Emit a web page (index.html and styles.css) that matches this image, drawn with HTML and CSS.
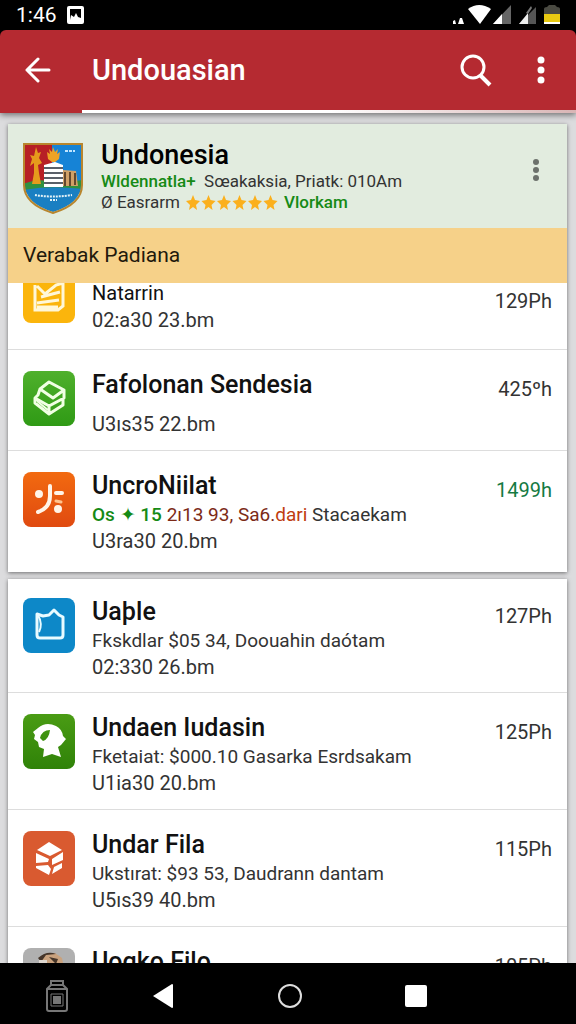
FILE: index.html
```
<!DOCTYPE html>
<html lang="id">
<head>
  <meta charset="UTF-8">
  <title>Undouasian</title>
  <meta name="viewport" content="width=device-width, initial-scale=1.0">
  <link rel="stylesheet" href="styles.css">
</head>
<body>
  <div class="status-bar">
    <span class="clock">1:46</span>
    <svg width="17" height="18" viewBox="0 0 17 18"><rect width="17" height="18" rx="2" fill="#fff"/><path d="M3 3h11v11H3z" fill="#000"/><path d="M3 14l1-5 3 2 2-4 2 4 3 1v2z" fill="#fff"/></svg>
    <svg class="signals" width="108" height="20" viewBox="0 0 108 20">
      <path d="M0 19v-3l2-1 1 4zM5 19l2-6h2l2 6z" fill="#fff"/>
      <path d="M15 4Q26-4 38 4L27 19z" fill="#fff"/>
      <path d="M40 19L58 0v19z" fill="#666"/><path d="M40 19l9-10v10z" fill="#fff"/>
      <path d="M66 19L83 2v17z" fill="#555"/><path d="M66 19l9-11v11z" fill="#eee"/><path d="M73 8l5-7 1 2-4 6z" fill="#777"/>
      <path d="M91 4q0-2 3-2l2-2h6l2 2q3 0 3 2v15H91z" fill="#4a4a42"/><path d="M91 9h16v10H91z" fill="#e8c912"/><path d="M91 17h16v2H91z" fill="#fff"/>
    </svg>
  </div>

  <header class="app-bar">
    <button class="icon-btn" aria-label="Kembali">
      <svg width="26" height="26" viewBox="0 0 26 26" fill="none" stroke="#fff" stroke-width="3" stroke-linecap="round" stroke-linejoin="round"><path d="M13 2L2 13l11 11M2 13h22"/></svg>
    </button>
    <h1>Undouasian</h1>
    <button class="icon-btn search-btn" aria-label="Cari">
      <svg width="32" height="34" viewBox="0 0 32 34" fill="none" stroke="#fff"><circle cx="13" cy="14" r="11" stroke-width="3"/><path d="M20 22l10 10" stroke-width="4"/></svg>
    </button>
    <button class="icon-btn" aria-label="Menu">
      <svg width="8" height="28" viewBox="0 0 8 28" fill="#fff"><circle cx="4" cy="4" r="3.5"/><circle cx="4" cy="14" r="3.5"/><circle cx="4" cy="24" r="3.5"/></svg>
    </button>
  </header>

  <main class="content">
    <section class="card">
      <div class="profile">
        <svg class="crest" width="60" height="71" viewBox="0 0 60 71">
          <defs><clipPath id="shield"><path d="M2 2h56v40q0 18-28 27Q2 60 2 42z"/></clipPath></defs>
          <g clip-path="url(#shield)">
            <path d="M0 0h30v50H0z" fill="#b71f25"/>
            <path d="M29 0h31v50H29z" fill="#1683d6"/>
            <path d="M0 41q16-7 34-1l26-3v12H0z" fill="#2f9140"/>
            <path d="M13 4l2 6 3-1-2 6 3 5-4 2 1 8 2 11H9l2-11V20l-4 3 2-7-2-4 4 1z" fill="#e69b1c"/>
            <path d="M30 4l2 5 3-3-1 5 3-2-1 7-4 3h-3l-4-3-1-7 3 2-1-5 3 3z" fill="#efa324"/>
            <path d="M21 22l11-3 8 3v22H21z" fill="#fff"/>
            <path d="M21 25h19M21 30h19M21 35h19M21 40h19" stroke="#242d38" stroke-width="1.5"/>
            <path d="M40 27l13 1 2 15H40z" fill="#d0a067"/>
            <path d="M42 29v14M47 29v14M52 30v12" stroke="#63482e" stroke-width="2"/>
            <path d="M42 8h10" stroke="#bfe4ff" stroke-width="2" stroke-dasharray="3 1"/>
            <path d="M0 47q28-5 60-1v25H0z" fill="#1a7fc2"/>
            <path d="M12 52q17 3 37 0M27 57h7" fill="none" stroke="#e6f3f7" stroke-width="2" stroke-dasharray="2 1"/>
          </g>
          <path d="M1 1h58v41q0 19-29 28Q1 61 1 42z" fill="none" stroke="#b8862e" stroke-width="2"/>
        </svg>
        <div class="profile-text">
          <h2>Undonesia</h2>
          <p><span class="green strong">Wldennatla+</span>&nbsp; Sœakaksia, Priatk: 010Am</p>
          <p class="rating">
            <span>Ø Easrarm</span>
            <svg width="92" height="16" viewBox="0 0 92 16" fill="#fbb01c" role="img" aria-label="6 bintang">
              <defs><path id="star" d="M7 0l2 5 5 1-4 4 1 5-4-3-4 3 1-5-4-4 5-1z"/></defs>
              <use href="#star"/><use href="#star" x="15.5"/><use href="#star" x="31"/><use href="#star" x="46.5"/><use href="#star" x="62"/><use href="#star" x="77.5"/>
            </svg>
            <span class="green strong">Vlorkam</span>
          </p>
        </div>
        <button class="icon-btn profile-menu" aria-label="Opsi">
          <svg width="6" height="24" viewBox="0 0 6 24" fill="#6c716c"><circle cx="3" cy="4" r="3"/><circle cx="3" cy="12" r="3"/><circle cx="3" cy="20" r="3"/></svg>
        </button>
      </div>
      <h3 class="section-title">Verabak Padiana</h3>

      <ul class="list">
        <li class="row row-scrolled">
          <svg class="app-icon amber" viewBox="0 0 52 55" fill="none" stroke="#fff7d8" stroke-width="3"><path d="M12 17v25h23l5-4V15l-7 2-11 9-8-8M18 29l19-5M14 35l22-3M14 39h21"/></svg>
          <div class="row-text">
            <h4>Natarrin</h4>
            <p>02:a30 23.bm</p>
          </div>
          <span class="time">129Ph</span>
        </li>
        <li class="row">
          <svg class="app-icon green-bg" viewBox="0 0 52 55" fill="none" stroke="#f1ffe4" stroke-width="3" stroke-linejoin="round"><path d="M17 18l9-7 15 8-11 8zM17 18l-2 6-3 3 14 8 15-8v-8M12 27v5l14 11 14-9v-7M26 35v7"/><path d="M14 30l11 9" stroke-width="2"/></svg>
          <div class="row-text spaced">
            <h4>Fafolonan Sendesia</h4>
            <p>U3ıs35 22.bm</p>
          </div>
          <span class="time">425ºh</span>
        </li>
        <li class="row">
          <svg class="app-icon orange" viewBox="0 0 52 55" fill="none" stroke="#fff4e8" stroke-width="4" stroke-linecap="round"><path d="M27 14v10q0 12-12 16M33 21h6"/><path d="M33 29l5 1" stroke="#ffc38e" stroke-width="3"/><circle cx="16" cy="22" r="2"/><circle cx="35" cy="37" r="2"/></svg>
          <div class="row-text">
            <h4>UncroNiilat</h4>
            <p class="detail"><span class="green strong">Os ✦ 15</span> <span class="rust">2ı13 93, Sa6.</span><span class="red">dari</span> Stacaekam</p>
            <p>U3ra30 20.bm</p>
          </div>
          <span class="time time-new">1499h</span>
        </li>
      </ul>
    </section>

    <section class="card">
      <ul class="list">
        <li class="row">
          <svg class="app-icon blue" viewBox="0 0 52 55" fill="none" stroke="#e9fbff" stroke-width="3" stroke-linejoin="round"><path d="M14 16l6 2 6-1 5-5 5 5 4 2v18q0 3-3 3H17q-3 0-3-3z"/><path d="M15 17q5 9 1 17" stroke-width="2"/></svg>
          <div class="row-text">
            <h4>Uaþle</h4>
            <p class="detail">Fkskdlar $05 34, Doouahin daótam</p>
            <p>02:330 26.bm</p>
          </div>
          <span class="time">127Ph</span>
        </li>
        <li class="row">
          <svg class="app-icon leaf" viewBox="0 0 52 55" fill="#fff"><path fill-rule="evenodd" d="M15 14q8-7 18-2 6 3 7 10l3 3-5 6-3 2 3 10-9-3-9 3 1-8-5-2-1-5-4-3 1-4-2-3zM20 27q6-2 7-11-8 0-10 8z"/></svg>
          <div class="row-text">
            <h4>Undaen Iudasin</h4>
            <p class="detail">Fketaiat: $000.10 Gasarka Esrdsakam</p>
            <p>U1ia30 20.bm</p>
          </div>
          <span class="time">125Ph</span>
        </li>
        <li class="row">
          <svg class="app-icon brick" viewBox="0 0 52 55" fill="#fff"><path d="M26 11l13 8-12 6-13-6zM13 22l13 6-1 3-12 1zM29 28l11-7v8l-11 5zM13 35l12-1 3 4-2 6-13-7zM31 36l8-4v5l-10 6z"/></svg>
          <div class="row-text">
            <h4>Undar Fila</h4>
            <p class="detail">Ukstırat: $93 53, Daudrann dantam</p>
            <p>U5ıs39 40.bm</p>
          </div>
          <span class="time">115Ph</span>
        </li>
        <li class="row">
          <svg class="app-icon grey" viewBox="0 0 52 55"><path d="M17 14l5-7 10-2 7 5 2 10-8 6H18z" fill="#c9a27e"/><path d="M15 10q9-8 18-4l-10 1-5 7zM26 9l9 2-2 5z" fill="#453529"/><path d="M16 12h8v8h-8z" fill="#ded7d0"/></svg>
          <div class="row-text">
            <h4>Uogko Filo</h4>
          </div>
          <span class="time">105Ph</span>
        </li>
      </ul>
    </section>
  </main>

  <nav class="nav-bar">
    <button class="icon-btn" aria-label="Baterai">
      <svg width="24" height="34" viewBox="0 0 24 34" fill="none" stroke="#777" stroke-width="2"><path d="M6 2h12v4l4 4v20q0 2-2 2H4q-2 0-2-2V10l4-4zM3 10h18M6 6h12"/><path d="M6 15h12v12H6z" stroke-width="1"/><path d="M8 17h8v8H8z" fill="#777" stroke="none"/></svg>
    </button>
    <div class="nav-keys">
      <button class="icon-btn" aria-label="Kembali">
        <svg width="22" height="26" viewBox="0 0 22 26"><path d="M20 1q1 0 1 1v22q0 1-1 1L1 13z" fill="#fff"/></svg>
      </button>
      <button class="icon-btn" aria-label="Beranda">
        <svg width="26" height="26" viewBox="0 0 26 26"><circle cx="13" cy="13" r="11" fill="none" stroke="#ddd" stroke-width="2"/></svg>
      </button>
      <button class="icon-btn" aria-label="Terbaru">
        <svg width="22" height="22" viewBox="0 0 22 22"><rect width="22" height="22" rx="2" fill="#fff"/></svg>
      </button>
    </div>
  </nav>
</body>
</html>
```
FILE: styles.css
```
* {
  box-sizing: border-box;
}
body {
  font-family: Roboto, sans-serif;
  margin: 0;
  height: 100vh;
  background: #000;
  color: #333;
  display: flex;
  flex-direction: column;
}
h1, h2, h3, h4, p, ul {
  margin: 0;
  padding: 0;
}
svg {
  display: block;
  flex: none;
}
.icon-btn {
  display: flex;
  align-items: center;
  justify-content: center;
  padding: 0;
  border: none;
  background: none;
  cursor: pointer;
}

/* status bar */
.status-bar {
  display: flex;
  align-items: center;
  gap: 10px;
  height: 30px;
  padding: 0 15px 0 16px;
  color: #fff;
}
.clock {
  font-size: 21px;
  line-height: 28px;
}
.signals {
  margin-left: auto;
}

/* app bar */
.app-bar {
  position: relative;
  z-index: 2;
  display: flex;
  align-items: center;
  height: 83px;
  padding: 0 31px 4px 25px;
  background: #b52a31;
  border-radius: 6px 6px 0 0;
  box-shadow: 0 2px 6px rgba(0, 0, 0, 0.5);
}
.app-bar::after {
  content: "";
  position: absolute;
  left: 82px;
  right: 0;
  bottom: 0;
  height: 3px;
  background: linear-gradient(to right, #fff 50%, #d9b5b5);
}
.app-bar h1 {
  flex: 1;
  padding-left: 41px;
  font-size: 29px;
  font-weight: 500;
  color: #fff;
}
.search-btn {
  margin-right: 45px;
}

/* content */
.content {
  flex: 1;
  min-height: 0;
  overflow: hidden;
  padding: 11px 9px 0 8px;
  background: #dcdcde;
}
.card {
  margin-bottom: 7px;
  background: #fff;
  box-shadow: 0 1px 4px rgba(0, 0, 0, 0.5);
}
.profile {
  position: relative;
  z-index: 1;
  display: flex;
  align-items: flex-start;
  height: 104px;
  padding: 16px 28px 0 15px;
  background: #e2ecdf;
}
.crest {
  margin-top: 3px;
}
.profile-text {
  flex: 1;
  padding-left: 18px;
}
.profile-text h2 {
  font-size: 27px;
  font-weight: 500;
  line-height: 31px;
  color: #000;
}
.profile-text p {
  font-size: 17px;
  line-height: 21px;
  white-space: nowrap;
}
.profile-text .rating {
  display: flex;
  align-items: center;
  gap: 6px;
}
.profile-menu {
  margin-top: 18px;
}
.section-title {
  position: relative;
  z-index: 1;
  padding: 0 15px;
  font-size: 21px;
  font-weight: 400;
  line-height: 55px;
  color: #22190c;
  background: #f6d189;
}

/* list rows */
.list {
  list-style: none;
}
.row {
  display: flex;
  align-items: flex-start;
  padding: 20px 15px 12px;
  border-bottom: 1px solid #ddd;
}
.row:last-child {
  padding-bottom: 17px;
  border-bottom: none;
}
.card + .card .row:first-child {
  padding-top: 18px;
  padding-bottom: 11px;
}
.app-icon {
  width: 52px;
  height: 55px;
  margin-top: 1px;
  border-radius: 8px;
}
.row-text {
  flex: 1;
  min-width: 0;
  padding-left: 17px;
}
.row-text h4 {
  font-size: 25px;
  font-weight: 500;
  line-height: 30px;
  color: #111;
}
.row-text p {
  font-size: 20px;
  line-height: 27px;
  white-space: nowrap;
}
.row-text .detail {
  font-size: 19px;
}
.spaced p {
  margin-top: 11px;
}
.time {
  margin-top: 6px;
  font-size: 20px;
  line-height: 27px;
}
.time-new {
  color: #157a43;
}

/* first row is partly scrolled under the section title */
.row-scrolled {
  align-items: flex-end;
  margin-top: -36px;
  padding-bottom: 15px;
}
.row-scrolled .app-icon {
  margin-bottom: 11px;
}
.row-scrolled .time {
  margin-bottom: 19px;
}
.row-scrolled h4 {
  font-size: 20px;
  font-weight: 400;
  line-height: 27px;
}

/* colours */
.green {
  color: #158a15;
}
.strong {
  font-weight: 500;
}
.rust {
  color: #7c2a17;
}
.red {
  color: #c03c10;
}
.amber {
  background: #fbb50c;
}
.green-bg {
  background: linear-gradient(#4fb02c, #2f9a15);
}
.orange {
  background: linear-gradient(#f26a10, #e04a10);
}
.blue {
  background: #0d88c8;
}
.leaf {
  background: linear-gradient(#4a9c14, #2f8208);
}
.brick {
  background: #d95a30;
}
.grey {
  background: #b0b0b0;
}

/* navigation bar */
.nav-bar {
  display: flex;
  align-items: center;
  height: 61px;
  padding: 4px 149px 0 45px;
  background: #000;
}
.nav-keys {
  flex: 1;
  display: flex;
  align-items: center;
  justify-content: space-between;
  padding-left: 83px;
}
```
